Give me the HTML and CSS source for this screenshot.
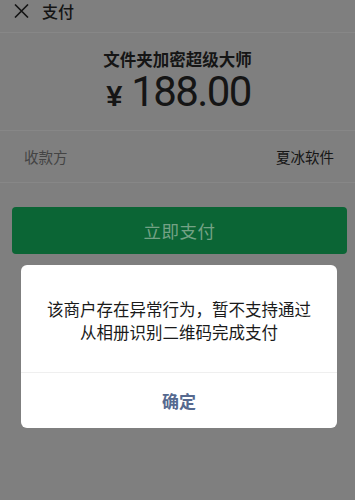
FILE: index.html
```html
<!DOCTYPE html>
<html>
<head>
<meta charset="utf-8">
<link rel="stylesheet" href="styles.css">
</head>
<body>
<div class="page">
  <div class="header">
    <svg class="close" width="15" height="14" viewBox="0 0 15 14"><path d="M1 0.5 L14 13.5 M14 0.5 L1 13.5" stroke="#141414" stroke-width="1.6" fill="none"/></svg>
    <span class="header-title">支付</span>
  </div>
  <div class="summary">
    <div class="product">文件夹加密超级大师</div>
    <div class="amount"><span class="yen">¥</span><span class="num">188.00</span></div>
  </div>
  <div class="row">
    <span class="label">收款方</span>
    <span class="value">夏冰软件</span>
  </div>
  <div class="btn-wrap">
    <div class="pay-btn">立即支付</div>
  </div>
</div>
<div class="dialog">
  <div class="msg">该商户存在异常行为，暂不支持通过<br>从相册识别二维码完成支付</div>
  <div class="ok">确定</div>
</div>
</body>
</html>
```
FILE: styles.css
```css
html, body {
  margin: 0;
  padding: 0;
  background: #7f7f7f;
  width: 355px;
  height: 500px;
  overflow: hidden;
  font-family: "Noto Sans CJK SC", "Liberation Sans", sans-serif;
}
.page {
  display: flex;
  flex-direction: column;
}
.header {
  height: 32px;
  border-bottom: 1px solid #878787;
  display: flex;
  align-items: flex-start;
  padding-left: 14px;
}
.close {
  margin-top: 4px;
}
.header-title {
  margin-left: 13px;
  margin-top: 1px;
  font-size: 16px;
  line-height: 20px;
  font-weight: 500;
  color: #141414;
}
.summary {
  height: 97px;
  border-bottom: 1px solid #878787;
  display: flex;
  flex-direction: column;
  align-items: center;
}
.product {
  margin-top: 16px;
  font-size: 16.5px;
  line-height: 20px;
  font-weight: 700;
  color: #151515;
}
.amount {
  display: flex;
  align-items: baseline;
  margin-top: 3px;
  margin-left: 2px;
  color: #151515;
  line-height: 40px;
}
.yen {
  font-family: "Liberation Sans", sans-serif;
  font-size: 29px;
  font-weight: 700;
  margin-right: 9px;
}
.num {
  font-family: Roboto, "Liberation Sans", sans-serif;
  font-size: 42px;
  font-weight: 400;
  letter-spacing: -1.6px;
}
.row {
  height: 51px;
  border-bottom: 1px solid #878787;
  display: flex;
  justify-content: space-between;
  align-items: center;
  padding: 0 21px 0 24px;
  font-size: 14.5px;
}
.label {
  color: #444444;
}
.value {
  color: #161616;
}
.btn-wrap {
  padding: 24px 8px 0 12px;
}
.pay-btn {
  height: 47px;
  background: #0b6535;
  border-radius: 4px;
  display: flex;
  align-items: center;
  justify-content: center;
  color: #74a285;
  font-size: 17.5px;
  letter-spacing: 0.5px;
}
.dialog {
  position: absolute;
  left: 21px;
  top: 265px;
  width: 316px;
  height: 163px;
  background: #ffffff;
  border-radius: 6px;
  display: flex;
  flex-direction: column;
}
.msg {
  padding: 33px 0 28px;
  text-align: center;
  font-size: 16.5px;
  line-height: 23px;
  color: #1a1a1a;
  border-bottom: 1px solid #efefef;
}
.ok {
  flex: 1;
  display: flex;
  align-items: center;
  justify-content: center;
  font-size: 17px;
  font-weight: 700;
  color: #56698f;
}
```
